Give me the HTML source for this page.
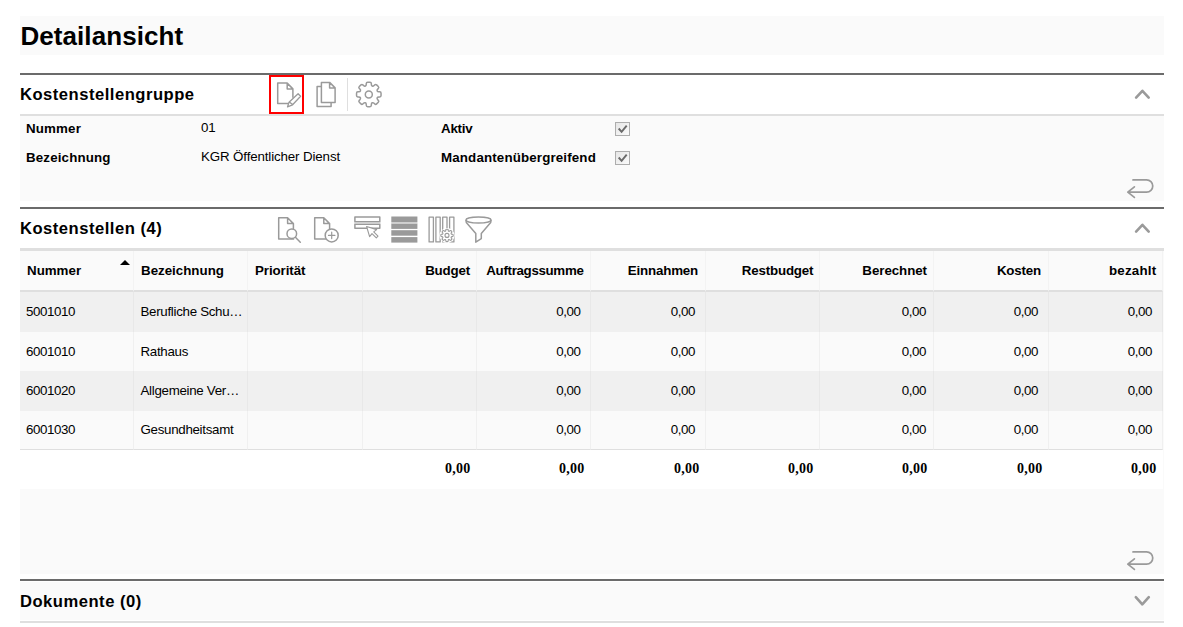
<!DOCTYPE html>
<html lang="de">
<head>
<meta charset="utf-8">
<title>Detailansicht</title>
<style>
*{box-sizing:border-box;margin:0;padding:0}
html,body{width:1183px;height:627px;overflow:hidden;background:#fff}
body{font-family:"Liberation Sans",sans-serif;font-size:12px;color:#000;position:relative}
.abs{position:absolute}
.title{left:20px;top:16px;width:1144px;height:39px;background:#fafafa}
.title h1{position:absolute;left:.4px;top:5px;font-size:26px;line-height:30px;font-weight:bold;color:#000;white-space:nowrap;letter-spacing:.08px}
.sec{left:20px;width:1144px}
.sec .bar{position:absolute;left:0;top:0;width:100%;height:2px;background:#6b6b6b}
.sec h2{position:absolute;left:0;font-size:16.6px;line-height:20px;font-weight:bold;color:#000;white-space:nowrap;letter-spacing:.5px}
.hr{position:absolute;left:0;width:100%;height:2px;background:#dfdfdf}
.panel{position:absolute;left:0;width:100%;background:#fafafa}
.lbl{position:absolute;font-size:13.33px;line-height:16px;font-weight:bold;color:#000;white-space:nowrap;letter-spacing:.15px}
.val{position:absolute;font-size:13.33px;line-height:16px;color:#000;white-space:nowrap;letter-spacing:-.13px}
.cb{position:absolute;width:15px;height:14px;border:1px solid #adadad;background:linear-gradient(135deg,#e6e6e6,#fafafa)}
.cb svg{position:absolute;left:-1px;top:-1px}
.ico{position:absolute;overflow:visible}
.redbox{position:absolute;border:2px solid #f00}
.vsep{position:absolute;width:1px;background:#dfdfdf}
table{position:absolute;left:0;border-collapse:separate;border-spacing:0;table-layout:fixed;width:1143px}
th,td{overflow:hidden;white-space:nowrap;text-overflow:ellipsis}
th{text-overflow:clip}
th{height:41px;background:#fafafa;font-size:13.33px;font-weight:bold;text-align:left;padding:0 7px;border-right:1px solid #f3f3f3;border-bottom:2px solid #dfdfdf;position:relative}
td{height:39.5px;font-size:13.33px;letter-spacing:-.4px;padding:0 4px 0 6px;border-right:1px solid #e8e8e8}
th.r,td.r{text-align:right}
td.r{padding-right:10px}
td.c2{letter-spacing:-.3px;padding:0 2px 0 6.5px}
tr.o td{background:#f0f0f0}
tr.e td{background:#fafafa;border-right-color:#f0f0f0}
tr.last td{border-bottom:1px solid #dfdfdf}
tfoot td{height:39px;background:#fff;border:none;font-family:"Liberation Serif",serif;font-weight:bold;font-size:14px;letter-spacing:.2px;text-align:right;padding:0 6.6px 2px 0}
.sort{position:absolute;left:100px;top:9px;width:0;height:0;border-left:5px solid transparent;border-right:5px solid transparent;border-bottom:5px solid #000}
</style>
</head>
<body>

<div class="abs title"><h1>Detailansicht</h1></div>

<!-- Kostenstellengruppe -->
<div class="abs sec" style="top:73px;height:136px">
  <div class="bar"></div>
  <h2 style="top:12px">Kostenstellengruppe</h2>
  <div class="hr" style="top:41px"></div>
  <div class="panel" style="top:43px;height:85px"></div>
  <div class="lbl" style="left:6px;top:48px">Nummer</div>
  <div class="val" style="left:181px;top:47px">01</div>
  <div class="lbl" style="left:6px;top:77px">Bezeichnung</div>
  <div class="val" style="left:181px;top:76px">KGR Öffentlicher Dienst</div>
  <div class="lbl" style="left:421px;top:48px;letter-spacing:-.25px">Aktiv</div>
  <div class="lbl" style="left:421px;top:77px">Mandantenübergreifend</div>
  <div class="cb" style="left:595px;top:49px"><svg width="15" height="14" viewBox="0 0 15 14"><path d="M3.7 6.5L6.6 9.8L11.7 3.6" fill="none" stroke="#6a6a6a" stroke-width="1.9"/></svg></div>
  <div class="cb" style="left:595px;top:78px"><svg width="15" height="14" viewBox="0 0 15 14"><path d="M3.7 6.5L6.6 9.8L11.7 3.6" fill="none" stroke="#6a6a6a" stroke-width="1.9"/></svg></div>
  <div class="redbox" style="left:249px;top:2px;width:35px;height:39px"></div>
  <div class="vsep" style="left:327px;top:5px;height:33px"></div>
</div>

<!-- Kostenstellen -->
<div class="abs sec" style="top:207px;height:372px">
  <div class="bar"></div>
  <h2 style="top:12px">Kostenstellen (4)</h2>
  <div class="hr" style="top:41px;height:3px"></div>
  <div class="panel" style="top:44px;height:323px"></div>
  <table style="top:44px">
    <colgroup><col style="width:114px"><col style="width:114px"><col style="width:115px"><col style="width:114px"><col style="width:114px"><col style="width:115px"><col style="width:114px"><col style="width:114px"><col style="width:115px"><col style="width:114px"></colgroup>
    <thead>
      <tr>
        <th>Nummer<span class="sort"></span></th><th>Bezeichnung</th><th style="letter-spacing:-.08px">Priorität</th><th class="r" style="letter-spacing:-.18px;padding-right:6px">Budget</th><th class="r" style="letter-spacing:-.33px;padding-right:6.5px">Auftragssumme</th><th class="r" style="letter-spacing:-.18px">Einnahmen</th><th class="r" style="letter-spacing:-.18px;padding-right:5.7px">Restbudget</th><th class="r" style="letter-spacing:-.06px;padding-right:6px">Berechnet</th><th class="r" style="letter-spacing:-.18px">Kosten</th><th class="r" style="letter-spacing:.22px;padding-right:5.6px">bezahlt</th>
      </tr>
    </thead>
    <tbody>
      <tr class="o"><td>5001010</td><td class="c2">Berufliche Schu…</td><td></td><td></td><td class="r" style="padding-right:9.4px">0,00</td><td class="r">0,00</td><td></td><td class="r" style="padding-right:7px">0,00</td><td class="r">0,00</td><td class="r">0,00</td></tr>
      <tr class="e"><td>6001010</td><td class="c2">Rathaus</td><td></td><td></td><td class="r" style="padding-right:9.4px">0,00</td><td class="r">0,00</td><td></td><td class="r" style="padding-right:7px">0,00</td><td class="r">0,00</td><td class="r">0,00</td></tr>
      <tr class="o"><td>6001020</td><td class="c2">Allgemeine Ver…</td><td></td><td></td><td class="r" style="padding-right:9.4px">0,00</td><td class="r">0,00</td><td></td><td class="r" style="padding-right:7px">0,00</td><td class="r">0,00</td><td class="r">0,00</td></tr>
      <tr class="e last"><td>6001030</td><td class="c2">Gesundheitsamt</td><td></td><td></td><td class="r" style="padding-right:9.4px">0,00</td><td class="r">0,00</td><td></td><td class="r" style="padding-right:7px">0,00</td><td class="r">0,00</td><td class="r">0,00</td></tr>
    </tbody>
    <tfoot>
      <tr><td></td><td></td><td></td><td>0,00</td><td>0,00</td><td>0,00</td><td>0,00</td><td>0,00</td><td>0,00</td><td>0,00</td></tr>
    </tfoot>
  </table>
</div>

<!-- Dokumente -->
<div class="abs sec" style="top:579px;height:48px">
  <div class="bar"></div>
  <div class="panel" style="top:3px;height:38px"></div>
  <h2 style="top:13px">Dokumente (0)</h2>
  <div class="hr" style="top:42px"></div>
</div>

<svg class="abs" style="left:0;top:0" width="1183" height="627" viewBox="0 0 1183 627" fill="none" stroke="#9a9a9a" stroke-width="1.5" stroke-linejoin="round" stroke-linecap="round">
<path d="M288 103.4H277.7V83.1H287.2L292.9 88.9V97.3M287.2 83.1V88.9H292.9"/>
<path d="M298.1 93.8L300.6 96.3L292.6 104.8L287.5 106.9L289 102.2ZM289.3 102L292.6 104.6" stroke-width="1.3"/>
<path d="M321.4 82.4H329.6L335.1 87.9V102.5H321.4ZM329.6 82.4V87.9H335.1M321.2 86.6H317.1V106.4H331.1V102.8"/>
<path d="M366.27 83.45Q366.31 82.15 367.61 82.15L369.99 82.15Q371.29 82.15 371.33 83.45L371.35 84.38Q371.38 85.67 372.26 86.04L372.26 86.04Q373.14 86.40 374.09 85.51L374.76 84.87Q375.70 83.98 376.62 84.90L378.30 86.58Q379.22 87.50 378.33 88.44L377.69 89.11Q376.80 90.06 377.16 90.94L377.16 90.94Q377.53 91.82 378.82 91.85L379.75 91.87Q381.05 91.91 381.05 93.21L381.05 95.59Q381.05 96.89 379.75 96.93L378.82 96.95Q377.53 96.98 377.16 97.86L377.16 97.86Q376.80 98.74 377.69 99.69L378.33 100.36Q379.22 101.30 378.30 102.22L376.62 103.90Q375.70 104.82 374.76 103.93L374.09 103.29Q373.14 102.40 372.26 102.76L372.26 102.76Q371.38 103.13 371.35 104.42L371.33 105.35Q371.29 106.65 369.99 106.65L367.61 106.65Q366.31 106.65 366.27 105.35L366.25 104.42Q366.22 103.13 365.34 102.76L365.34 102.76Q364.46 102.40 363.51 103.29L362.84 103.93Q361.90 104.82 360.98 103.90L359.30 102.22Q358.38 101.30 359.27 100.36L359.91 99.69Q360.80 98.74 360.44 97.86L360.44 97.86Q360.07 96.98 358.78 96.95L357.85 96.93Q356.55 96.89 356.55 95.59L356.55 93.21Q356.55 91.91 357.85 91.87L358.78 91.85Q360.07 91.82 360.44 90.94L360.44 90.94Q360.80 90.06 359.91 89.11L359.27 88.44Q358.38 87.50 359.30 86.58L360.98 84.90Q361.90 83.98 362.84 84.87L363.51 85.51Q364.46 86.40 365.34 86.04L365.34 86.04Q366.22 85.67 366.25 84.38Z"/>
<circle cx="368.8" cy="94.4" r="3.5"/>
<path d="M1136.1 97.6L1142.4 90.8L1148.7 97.6" stroke-width="2.6"/>
<path d="M1133 179.9H1146.6A6.15 6.15 0 0 1 1146.6 192.2H1128M1134.4 186.9L1127.8 192.2L1134.4 197.4" stroke-width="1.7"/>
<path d="M293.4 229.5V223.6L287.6 217.7H278.7V239H293.6M287.6 217.7V223.6H293.4"/>
<circle cx="291.8" cy="233.7" r="4.8" fill="#fff"/><path d="M295.4 237.3L300.3 242.2"/>
<path d="M329.6 229V223.6L323.8 217.7H314.7V239H326.5M323.8 217.7V223.6H329.6"/>
<circle cx="331.7" cy="235.4" r="6.5" fill="#fff"/><path d="M328.5 235.4H334.9M331.7 232.2V238.6" stroke-width="1.2"/>
<rect x="354.9" y="217.1" width="24.9" height="4.6" fill="#fff"/><rect x="354.9" y="224.2" width="24.9" height="4.1" fill="#fff"/><path d="M354.2 222.95H380.5" stroke="#cfcfcf" stroke-width="1.2" stroke-linecap="butt"/>
<path d="M366.6 226.5L369.6 236.6L372 233.6L376.3 237.9L378 236.2L373.7 231.9L376.7 229.6Z" fill="#fff" stroke-width="1.1"/>
<g stroke="none" fill="#9a9a9a"><rect x="391.3" y="216.5" width="26.1" height="5.6"/><rect x="391.3" y="223.5" width="26.1" height="5.4"/><rect x="391.3" y="230.2" width="26.1" height="5.5"/><rect x="391.3" y="237.1" width="26.1" height="5.5"/><rect x="391.3" y="222.1" width="26.1" height="1.4" fill="#cdcdcd"/></g>
<rect x="429.1" y="217.1" width="4.3" height="24.8" stroke-width="1.3"/>
<rect x="435.9" y="217.1" width="4.3" height="24.8" stroke-width="1.3"/>
<rect x="442.7" y="217.1" width="4.3" height="24.8" stroke-width="1.3"/>
<rect x="449.6" y="217.1" width="4.3" height="24.8" stroke-width="1.3"/>
<circle cx="447" cy="235.5" r="7.6" fill="#fff" stroke="none"/>
<path d="M445.80 230.02Q445.80 229.22 446.60 229.22L447.40 229.22Q448.20 229.22 448.20 230.02L448.20 230.26Q448.20 231.06 448.71 231.27L448.71 231.27Q449.22 231.48 449.78 230.92L449.96 230.74Q450.52 230.18 451.09 230.74L451.66 231.31Q452.22 231.88 451.66 232.44L451.48 232.62Q450.92 233.18 451.13 233.69L451.13 233.69Q451.34 234.20 452.14 234.20L452.38 234.20Q453.18 234.20 453.18 235.00L453.18 235.80Q453.18 236.60 452.38 236.60L452.14 236.60Q451.34 236.60 451.13 237.11L451.13 237.11Q450.92 237.62 451.48 238.18L451.66 238.36Q452.22 238.92 451.66 239.49L451.09 240.06Q450.52 240.62 449.96 240.06L449.78 239.88Q449.22 239.32 448.71 239.53L448.71 239.53Q448.20 239.74 448.20 240.54L448.20 240.78Q448.20 241.58 447.40 241.58L446.60 241.58Q445.80 241.58 445.80 240.78L445.80 240.54Q445.80 239.74 445.29 239.53L445.29 239.53Q444.78 239.32 444.22 239.88L444.04 240.06Q443.48 240.62 442.91 240.06L442.34 239.49Q441.78 238.92 442.34 238.36L442.52 238.18Q443.08 237.62 442.87 237.11L442.87 237.11Q442.66 236.60 441.86 236.60L441.62 236.60Q440.82 236.60 440.82 235.80L440.82 235.00Q440.82 234.20 441.62 234.20L441.86 234.20Q442.66 234.20 442.87 233.69L442.87 233.69Q443.08 233.18 442.52 232.62L442.34 232.44Q441.78 231.88 442.34 231.31L442.91 230.74Q443.48 230.18 444.04 230.74L444.22 230.92Q444.78 231.48 445.29 231.27L445.29 231.27Q445.80 231.06 445.80 230.26Z" stroke-width="1.1" fill="#fff"/>
<circle cx="447" cy="235.4" r="2" stroke-width="1.1"/>
<ellipse cx="478.5" cy="220" rx="12.5" ry="3"/>
<path d="M466 220.5L466.3 222.5L475.8 233.6V242.2L481.3 238.6V233.6L490.7 222.5L491 220.5"/>
<path d="M1136.1 231.6L1142.4 224.8L1148.7 231.6" stroke-width="2.6"/>
<path d="M1133 551.9H1146.6A6.15 6.15 0 0 1 1146.6 564.2H1128M1134.4 558.9L1127.8 564.2L1134.4 569.4" stroke-width="1.7"/>
<path d="M1135.8 597.1L1142.3 604.4L1148.8 597.1" stroke-width="2.6"/>
</svg>
</body>
</html>
